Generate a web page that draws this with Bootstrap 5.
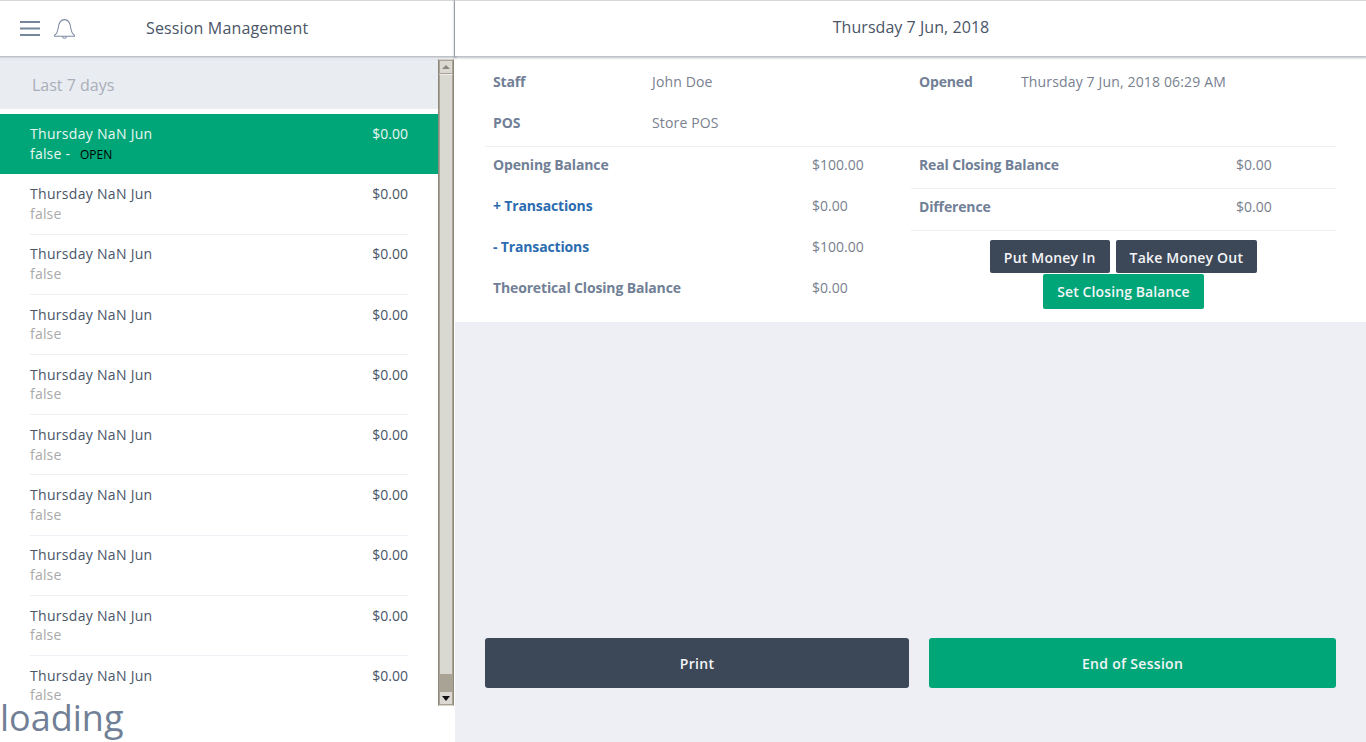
<!DOCTYPE html>
<html lang="en"><head><meta charset="utf-8"><title>Session Management</title>
<link rel="stylesheet" href="https://cdn.jsdelivr.net/npm/bootstrap@5.3.0/dist/css/bootstrap.min.css">
<style>
html,body{height:100%}
body{font-family:"Open Sans",sans-serif;font-size:14px;color:#4a5568;background:#eeeff4;overflow:hidden}
.app{height:742px;width:1366px}
.left{width:455px;background:#fff;position:relative;flex:none}
.topbar{height:56px;background:#fff;border-top:1px solid #d8d8d8;box-shadow:0 1px 2px 1px rgba(60,70,90,.35);position:relative;z-index:2;flex:none}
.left .topbar{border-right:1px solid #b5b7bd}
.ttl{font-size:16px;margin-left:69px;line-height:53px;letter-spacing:.15px}
.icons{padding-left:20px;gap:12px;height:54px}
.scrollarea{height:647px;margin-top:3px;flex:none}
.listpane{width:438px;overflow:hidden;flex:none}
.sec{height:50px;background:#e9ecf1;color:#a9afba;font-size:16px;padding:14px 0 0 32px;line-height:24px}
.sess{height:60.2px;margin:0 30px;padding-top:10px;line-height:19.6px;position:relative;letter-spacing:.3px}
.sess::after{content:"";position:absolute;left:0;right:0;top:59.4px;height:1px;background:#eeeff4}
.sess .amt{letter-spacing:0}
.sess .sub{color:#a9a9a9;letter-spacing:.2px}
.sess.on{background:#00a678;color:#e9f7f2;margin:0;padding:10px 30px 0;border:0;margin-top:5px}
.sess.on::after,.sess.noline::after{display:none}
.sess.on .sub{color:#e9f7f2}
.opentag{color:#000;font-size:12px;margin-left:6px;letter-spacing:0}
.sbar{width:16px;background:#a8a395;border:1px solid #d8d5cc;border-left-color:#8c887c;border-right-color:#8c887c;flex:none}
.sbtn{height:14px;background:#dbd9d2;border:1px solid #a8a395;display:flex;align-items:center;justify-content:center;flex:none}
.sthumb{height:601px;background:#d9d8d1;border:1px solid #a8a395;border-top-color:#eee;flex:none}
.loadtxt{position:absolute;left:0;top:693px;font-size:36px;line-height:50px;color:#718096;z-index:3}
.right{width:911px;flex:none}
.datehead{text-align:center;font-size:16px;line-height:53px;letter-spacing:.05px;padding-left:1px}
.panel{background:#fff;height:266px;padding:0 30px;flex:none}
.cell{color:#78808f;letter-spacing:.15px}
.cell.amt{letter-spacing:0}
.lbl{font-weight:700;color:#718096;letter-spacing:-.15px}
.lbl.blue{color:#2b6cb0}
.inforow{height:41px;line-height:41px;padding-left:8px}
.inforow-top{height:90px;padding-top:5px}
.kv1{width:159px}
.kv2{width:102px}
.c-left{width:426px;flex:none}
.c-right{width:425px;flex:none}
.mrow{height:41px;line-height:36px;padding-left:8px}
.mrow .kl{width:319px}
.rrow{height:42px;line-height:36px;padding-left:8px;border-top:1px solid #eeeff4}
.rrow .kl{width:317px}
.rule{border-top:1px solid #eeeff4}
.btnwrap{padding-top:9px;column-gap:6px;row-gap:1px}
.btn-x{height:33px;border-radius:2px;font-size:14px;font-weight:600;padding:0 14px;line-height:35px;color:#f4f5f7;border:0;letter-spacing:.2px}
.btn-x.tall{height:35px;letter-spacing:.1px}
.dk{background:#3c4758}
.gr{background:#00a678}
.bigbar{padding:0 30px;margin-top:316px;gap:20px}
.bigbtn{height:50px;border-radius:3px;font-weight:600;font-size:14px;color:#f4f5f7;border:0;letter-spacing:.3px}
.b1{width:424px}.b2{width:407px}
</style></head><body>
<div class="app d-flex">
 <div class="left d-flex flex-column">
  <div class="topbar d-flex align-items-center">
   <div class="icons d-flex align-items-center">
    <svg width="21" height="17" viewBox="0 0 21 17"><g fill="#75859b"><rect y="1" width="20" height="2"/><rect y="7.5" width="20" height="2"/><rect y="14" width="20" height="2"/></g></svg>
    <svg width="24" height="23" viewBox="0 0 23 22" fill="none" stroke="#7d8ba0" stroke-width="1"><path d="M1.500 17.500c2-1.500 3-3.500 3.500-7 .5-4.500 2.500-8 6-8s5.500 3.500 6 8c.5 3.500 1.500 5.500 3.500 7 .5.5 0 1-.5 1H2c-.5 0-1-.5-.5-1z"/><path d="M9 18.500c.5 2.500 3.500 2.500 4 0"/></svg>
   </div>
   <div class="ttl">Session Management</div>
  </div>
  <div class="scrollarea d-flex">
   <div class="listpane">
    <div class="sec">Last 7 days</div>
    <div class="sess on"><div class="d-flex justify-content-between"><span>Thursday NaN Jun</span><span class="amt">$0.00</span></div><div class="sub">false - <span class="opentag">OPEN</span></div></div>
    <div class="sess"><div class="d-flex justify-content-between"><span>Thursday NaN Jun</span><span class="amt">$0.00</span></div><div class="sub">false</div></div>
    <div class="sess"><div class="d-flex justify-content-between"><span>Thursday NaN Jun</span><span class="amt">$0.00</span></div><div class="sub">false</div></div>
    <div class="sess"><div class="d-flex justify-content-between"><span>Thursday NaN Jun</span><span class="amt">$0.00</span></div><div class="sub">false</div></div>
    <div class="sess"><div class="d-flex justify-content-between"><span>Thursday NaN Jun</span><span class="amt">$0.00</span></div><div class="sub">false</div></div>
    <div class="sess"><div class="d-flex justify-content-between"><span>Thursday NaN Jun</span><span class="amt">$0.00</span></div><div class="sub">false</div></div>
    <div class="sess"><div class="d-flex justify-content-between"><span>Thursday NaN Jun</span><span class="amt">$0.00</span></div><div class="sub">false</div></div>
    <div class="sess"><div class="d-flex justify-content-between"><span>Thursday NaN Jun</span><span class="amt">$0.00</span></div><div class="sub">false</div></div>
    <div class="sess"><div class="d-flex justify-content-between"><span>Thursday NaN Jun</span><span class="amt">$0.00</span></div><div class="sub">false</div></div>
    <div class="sess noline"><div class="d-flex justify-content-between"><span>Thursday NaN Jun</span><span class="amt">$0.00</span></div><div class="sub">false</div></div>
   </div>
   <div class="sbar d-flex flex-column">
    <div class="sbtn"><svg width="8" height="5"><path d="M0 4h8L4 0z" fill="#8c887c"/></svg></div>
    <div class="sthumb"></div>
    <div class="flex-grow-1"></div>
    <div class="sbtn"><svg width="8" height="5"><path d="M0 0h8L4 5z" fill="#111"/></svg></div>
   </div>
  </div>
  <div class="loadtxt">loading</div>
 </div>
 <div class="right d-flex flex-column">
  <div class="topbar datehead">Thursday 7 Jun, 2018</div>
  <div class="panel d-flex flex-column">
   <div class="d-flex inforow-top">
    <div class="c-left">
     <div class="inforow d-flex"><div class="kv1 lbl">Staff</div><div class="cell">John Doe</div></div>
     <div class="inforow d-flex"><div class="kv1 lbl">POS</div><div class="cell">Store POS</div></div>
    </div>
    <div class="c-right">
     <div class="inforow d-flex"><div class="kv2 lbl">Opened</div><div class="cell">Thursday 7 Jun, 2018 06:29 AM</div></div>
    </div>
   </div>
   <div class="d-flex">
    <div class="c-left rule">
     <div class="mrow d-flex"><div class="kl lbl">Opening Balance</div><div class="cell amt">$100.00</div></div>
     <div class="mrow d-flex"><div class="kl lbl blue">+ Transactions</div><div class="cell amt">$0.00</div></div>
     <div class="mrow d-flex"><div class="kl lbl blue">- Transactions</div><div class="cell amt">$100.00</div></div>
     <div class="mrow d-flex"><div class="kl lbl">Theoretical Closing Balance</div><div class="cell amt">$0.00</div></div>
    </div>
    <div class="c-right">
     <div class="rrow d-flex"><div class="kl lbl">Real Closing Balance</div><div class="cell amt">$0.00</div></div>
     <div class="rrow d-flex"><div class="kl lbl">Difference</div><div class="cell amt">$0.00</div></div>
     <div class="rule d-flex flex-wrap justify-content-center btnwrap">
      <button class="btn-x dk">Put Money In</button><button class="btn-x dk">Take Money Out</button>
      <div class="w-100 d-flex justify-content-center"><button class="btn-x tall gr">Set Closing Balance</button></div>
     </div>
    </div>
   </div>
  </div>
  <div class="bigbar d-flex">
   <button class="bigbtn dk b1">Print</button><button class="bigbtn gr b2">End of Session</button>
  </div>
 </div>
</div>
<script src="https://cdn.jsdelivr.net/npm/bootstrap@5.3.0/dist/js/bootstrap.bundle.min.js"></script>
</body></html>
